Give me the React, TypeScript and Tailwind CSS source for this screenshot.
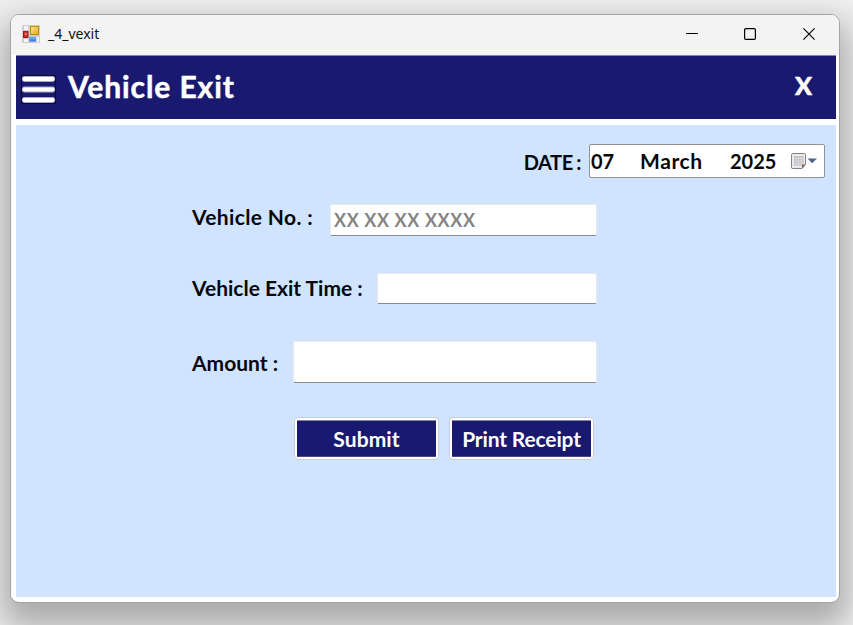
import React from "react";

const gothic = "font-['Lato','Open_Sans',sans-serif] font-bold whitespace-pre";

function FormIcon() {
  return (
    <svg width="18" height="18" viewBox="0 0 18 18" className="block">
      <defs>
        <linearGradient id="gold" x1="0" y1="0" x2="1" y2="1">
          <stop offset="0" stopColor="#ffe98a" />
          <stop offset="1" stopColor="#e8ac00" />
        </linearGradient>
        <linearGradient id="blue" x1="0" y1="0" x2="0" y2="1">
          <stop offset="0" stopColor="#7db4ff" />
          <stop offset="1" stopColor="#2f6fd6" />
        </linearGradient>
      </defs>
      <rect width="18" height="18" rx="1" fill="#cfcfcf" />
      <rect x="2" y="1" width="4" height="4" fill="#f4f4f4" />
      <rect x="2" y="14" width="4" height="3" fill="#f4f4f4" />
      <rect x="14" y="12" width="3" height="5" fill="#f0f0f0" />
      <rect x="1.5" y="6.5" width="4.5" height="6" fill="#c8342a" stroke="#9b1c17" />
      <rect x="3" y="8" width="1.6" height="2" fill="#e98a7c" />
      <rect x="8.5" y="1.5" width="8" height="8" fill="url(#gold)" stroke="#bd8b17" />
      <rect x="7.5" y="12" width="6.5" height="4.5" fill="url(#blue)" stroke="#6f9fe0" strokeWidth=".6" />
    </svg>
  );
}

function MenuIcon() {
  return (
    <svg width="35" height="29" viewBox="0 0 35 29" className="block">
      <rect x=".5" y=".5" width="34" height="28" fill="#1a1a6e" stroke="#0c0c24" />
      {[1, 11.5, 22].map((y) => (
        <g key={y}>
          <rect x="1" y={y} width="33" height="6" rx="2.4" fill="#a9a9cf" />
          <rect x="1.4" y={y + 0.9} width="32.2" height="4.2" rx="2" fill="#fff" />
        </g>
      ))}
    </svg>
  );
}

function CalendarIcon() {
  return (
    <svg width="27" height="17" viewBox="0 0 27 17" className="block">
      <path d="M1 .5H13.5Q14.5 .5 14.5 1.5V11.5L11 15.5H1.5Q.5 15.5 .5 14.5V1.5Z" fill="#ece9e8" stroke="#8a8080" />
      <rect x="3" y="3" width="9.5" height="9.5" fill="#b9bcc4" />
      <path d="M3 5.5H12.5M3 8H12.5M3 10.5H12.5M5.3 3V12.5M7.8 3V12.5M10.2 3V12.5" stroke="#e6e7ea" strokeWidth=".7" />
      <path d="M14.5 11.5H11V15.5Z" fill="#75696a" />
      <path d="M16.5 5.5H26L21.2 10.2Z" fill="#4d6490" />
    </svg>
  );
}

function Field({ className, children }: { className: string; children?: React.ReactNode }) {
  return (
    <div className={`flex items-center rounded-[2px] border border-[#e6e9ee] border-b-[#86898e] bg-white ${className}`}>
      {children}
    </div>
  );
}

function ActionButton({ className, children }: { className: string; children: React.ReactNode }) {
  return (
    <button className="h-[43px] w-[145px] rounded-[4px] border border-[#cbcdd2] bg-white p-[2px]">
      <span className={`flex h-[37px] w-full items-center justify-center border-y border-t-[#8585ac] border-b-[#4a4a8c] bg-[#19196f] text-[21px] text-white ${gothic} ${className}`}>
        {children}
      </span>
    </button>
  );
}

export default function App() {
  return (
    <div className="h-[625px] w-[853px] overflow-hidden bg-[#efefef] pt-[14px] pl-[10px]">
      <div className="h-[589px] w-[830px] overflow-hidden rounded-[9px] border border-[#a3a3a3] bg-white shadow-[0_16px_32px_8px_rgba(0,0,0,0.29)]">
        <header className="flex h-[40px] items-center bg-[#f3f3f3] pb-[2px] pl-[11px]">
          <FormIcon />
          <span className="mb-[2px] ml-[8px] font-['Noto_Sans','Open_Sans',sans-serif] text-[14px] text-[#111]">_4_vexit</span>
          <div className="ml-auto flex items-center pr-[24px]">
            <svg width="12" height="12" viewBox="0 0 12 12">
              <path d="M0 5.5H12" stroke="#000" />
            </svg>
            <svg width="12" height="12" viewBox="0 0 12 12" className="ml-[46px]">
              <rect x=".6" y=".6" width="10.8" height="10.8" rx="1.2" fill="none" stroke="#000" strokeWidth="1.2" />
            </svg>
            <svg width="12" height="12" viewBox="0 0 12 12" className="ml-[47px]">
              <path d="M.4 .4L11.6 11.6M11.6 .4L.4 11.6" stroke="#000" strokeWidth="1.15" />
            </svg>
          </div>
        </header>

        <div className="h-[547px] border-l border-[#f3f3f3] pl-[4px]">
          <div className="flex h-[64px] w-[820px] border-t border-[#8585ac] bg-[#19196f] pl-[5px] text-white">
            <div className="pt-[19px]">
              <MenuIcon />
            </div>
            <h1 className={`ml-[12px] pt-[10px] text-[30px] leading-[40px] tracking-[0.9px] [-webkit-text-stroke:0.5px_white] ${gothic}`}>Vehicle Exit</h1>
            <span className="mr-[24px] ml-auto pt-[9px] font-['Lato','Open_Sans',sans-serif] text-[25px] leading-[40px] font-black [-webkit-text-stroke:0.5px_white]">X</span>
          </div>

          <main className="mt-[6px] h-[472px] w-[820px] bg-[#d0e3ff] text-[21px] text-[#08080c]">
            <div className="flex items-center justify-end pt-[19px] pr-[11px]">
              <span className={`mr-[8px] pt-px text-[20px] tracking-[-0.4px] [word-spacing:-1px] ${gothic}`}>DATE :</span>
              <div className={`flex h-[34px] w-[236px] items-center rounded-[2px] border border-[#8f9299] bg-white pl-[1px] ${gothic}`}>
                <span className="w-[49px] text-[20px]">07</span>
                <span className="w-[90px] tracking-[0.6px]">March</span>
                <span className="w-[61px] text-[20px]">2025</span>
                <CalendarIcon />
              </div>
            </div>

            <div className="w-[581px] pl-[176px]">
              <div className="mt-[26px] flex h-[32px] justify-between">
                <span className={`leading-[25px] tracking-[0.35px] ${gothic}`}>Vehicle No. :</span>
                <Field className="w-[267px] pl-[3px]">
                  <span className={`pb-px text-[18px] leading-[28px] tracking-[0.6px] text-[#858585] ${gothic}`}>XX XX XX XXXX</span>
                </Field>
              </div>
              <div className="mt-[37px] flex h-[31px] justify-between">
                <span className={`leading-[30px] ${gothic}`}>Vehicle Exit Time :</span>
                <Field className="w-[220px]" />
              </div>
              <div className="mt-[37px] flex h-[42px] justify-between">
                <span className={`leading-[44px] ${gothic}`}>Amount :</span>
                <Field className="w-[304px]" />
              </div>
            </div>

            <div className="mt-[34px] flex gap-[10px] pl-[278px]">
              <ActionButton className="tracking-[0.1px]">Submit</ActionButton>
              <ActionButton className="tracking-[-0.15px]">Print Receipt</ActionButton>
            </div>
          </main>
        </div>
      </div>
    </div>
  );
}
